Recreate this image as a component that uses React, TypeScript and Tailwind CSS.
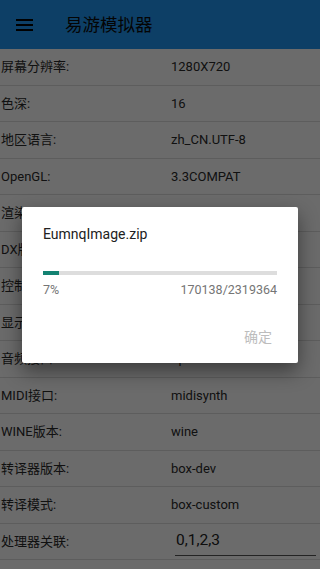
import React from 'react';

type Fila = { etiqueta: string; valor: string };

// Filas de configuración del emulador
const filas: Fila[] = [
  { etiqueta: '屏幕分辨率:', valor: '1280X720' },
  { etiqueta: '色深:', valor: '16' },
  { etiqueta: '地区语言:', valor: 'zh_CN.UTF-8' },
  { etiqueta: 'OpenGL:', valor: '3.3COMPAT' },
  { etiqueta: '渲染器:', valor: 'gl' },
  { etiqueta: 'DX版本:', valor: 'dxvk' },
  { etiqueta: '控制器:', valor: 'default' },
  { etiqueta: '显示模式:', valor: 'auto' },
  { etiqueta: '音频接口:', valor: 'opensles' },
  { etiqueta: 'MIDI接口:', valor: 'midisynth' },
  { etiqueta: 'WINE版本:', valor: 'wine' },
  { etiqueta: '转译器版本:', valor: 'box-dev' },
  { etiqueta: '转译模式:', valor: 'box-custom' },
];

const fuente = { fontFamily: 'Roboto, "Noto Sans CJK SC", sans-serif' };

const App: React.FC = () => {
  const descargado = 170138;
  const total = 2319364;
  const porcentaje = Math.floor((descargado / total) * 100);

  return (
    <div className="relative h-[569px] w-[320px] overflow-hidden bg-white" style={fuente}>
      {/* Barra superior */}
      <div className="flex h-[49px] items-center bg-[#2196f3]">
        <div className="ml-4 flex w-[17px] flex-col gap-[3px]">
          <span className="h-[2px] w-full bg-black" />
          <span className="h-[2px] w-full bg-black" />
          <span className="h-[2px] w-full bg-black" />
        </div>
        <h1 className="ml-[32px] pt-[2px] text-[17.5px] text-[#0a0a0a]">易游模拟器</h1>
      </div>

      {/* Lista de ajustes */}
      <div className="flex flex-col">
        {filas.map((fila) => (
          <div key={fila.etiqueta} className="flex h-[36.5px] items-center border-b border-[#dedede] text-[13px] text-[#2a2a2a]">
            <span className="w-[171px] pl-[1px]">{fila.etiqueta}</span>
            <span>{fila.valor}</span>
          </div>
        ))}
        <div className="flex h-[36.5px] items-center border-b border-[#dedede] text-[13px] text-[#2a2a2a]">
          <span className="w-[175px] pl-[1px]">处理器关联:</span>
          <div className="mr-[4px] flex h-[30px] flex-1 items-center border-b border-[#555]">
            <span className="pl-[1px] text-[15.5px] text-[#222]">0,1,2,3</span>
          </div>
        </div>
      </div>

      {/* Capa oscura y diálogo de descarga */}
      <div className="absolute inset-0 flex items-center justify-center bg-black/[0.58]">
        <div className="flex h-[156px] w-[276px] flex-col rounded-[2px] bg-white px-[21px] shadow-[0_8px_20px_rgba(0,0,0,0.45)]">
          <div className="mt-[17px] text-[14px] text-[#212121]">EumnqImage.zip</div>
          <div className="mt-[26px] h-[4px] w-full bg-[#dddddd]">
            <div className="h-full bg-[#138272]" style={{ width: `${porcentaje}%` }} />
          </div>
          <div className="mt-[6px] flex justify-between text-[12.5px] text-[#757575]">
            <span>{porcentaje}%</span>
            <span>
              {descargado}/{total}
            </span>
          </div>
          <div className="mt-[28px] flex justify-end pr-[5px] text-[14px] text-[#bdbdbd]">确定</div>
        </div>
      </div>
    </div>
  );
};

export default App;
